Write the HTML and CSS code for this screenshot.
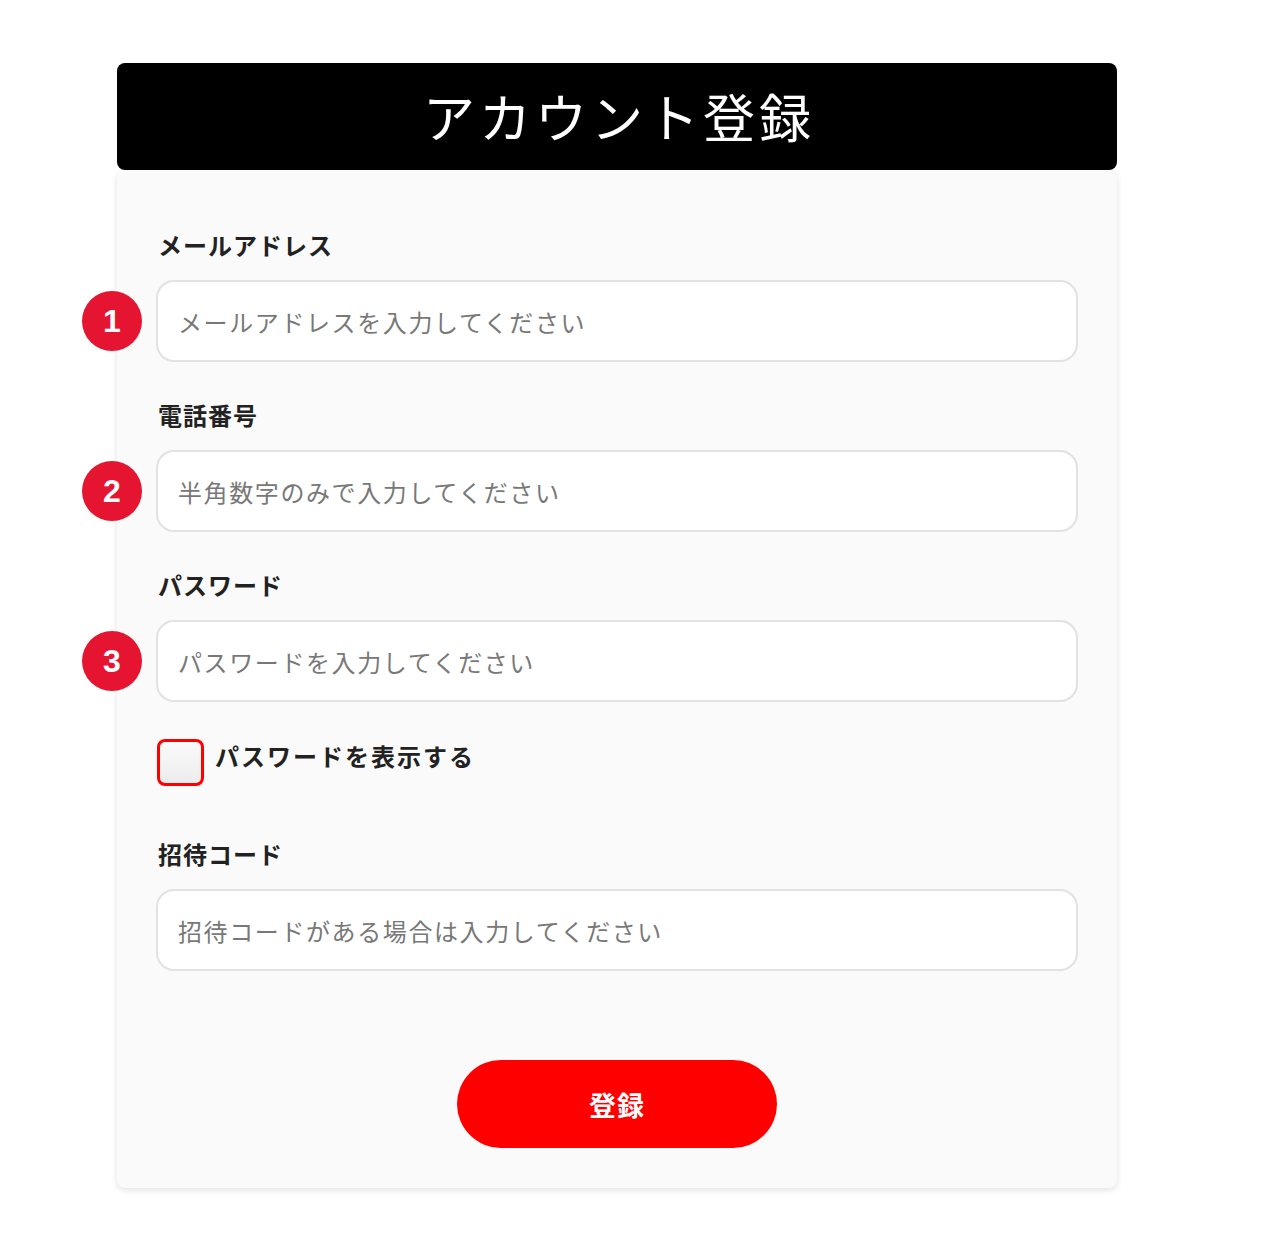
FILE: index.html
```html
<!DOCTYPE html>
<html lang="ja">
<head>
<meta charset="utf-8">
<title>アカウント登録</title>
<link rel="stylesheet" href="styles.css">
</head>
<body>
<div class="page">
  <h1 class="title">アカウント登録</h1>
  <form class="card">
    <div class="field">
      <label class="label">メールアドレス</label>
      <div class="input-wrap">
        <span class="badge">1</span>
        <input class="input" type="text" placeholder="メールアドレスを入力してください">
      </div>
    </div>
    <div class="field">
      <label class="label">電話番号</label>
      <div class="input-wrap">
        <span class="badge">2</span>
        <input class="input" type="text" placeholder="半角数字のみで入力してください">
      </div>
    </div>
    <div class="field">
      <label class="label">パスワード</label>
      <div class="input-wrap">
        <span class="badge">3</span>
        <input class="input" type="password" placeholder="パスワードを入力してください">
      </div>
    </div>
    <label class="check-row">
      <span class="checkbox"></span>
      <span class="check-text">パスワードを表示する</span>
    </label>
    <div class="field field-last">
      <label class="label">招待コード</label>
      <div class="input-wrap">
        <input class="input" type="text" placeholder="招待コードがある場合は入力してください">
      </div>
    </div>
    <div class="actions">
      <button class="submit" type="button">登録</button>
    </div>
  </form>
</div>
</body>
</html>
```
FILE: styles.css
```css
* { box-sizing: border-box; }
html, body { margin: 0; padding: 0; background: #fff; }
body {
  font-family: "Noto Sans CJK JP", "Noto Sans", sans-serif;
  color: #222;
}
.page {
  width: 1000px;
  margin: 63px 0 40px 117px;
}
.title {
  margin: 0;
  height: 107px;
  background: #000;
  color: #fff;
  border-radius: 8px;
  text-align: center;
  font-size: 52px;
  font-weight: 400;
  line-height: 105px;
  letter-spacing: 4px;
  padding-left: 4px;
}
.card {
  background: #fafafa;
  border-radius: 8px;
  box-shadow: 0 2px 6px rgba(0,0,0,0.12);
  padding: 59px 39px 40px 39px;
}
.field { margin-bottom: 37px; }
.field-last { margin-bottom: 0; }
.label {
  display: block;
  padding-left: 2px;
  font-size: 24px;
  font-weight: 700;
  line-height: 32px;
  margin-bottom: 19px;
  color: #222;
  letter-spacing: 1px;
}
.input-wrap { position: relative; }
.badge {
  position: absolute;
  left: -74px;
  top: 50%;
  width: 60px;
  height: 60px;
  margin-top: -30px;
  border-radius: 50%;
  background: #e51431;
  color: #fff;
  font-family: "Liberation Sans", Arial, sans-serif;
  font-weight: 700;
  font-size: 32px;
  line-height: 60px;
  text-align: center;
}
.input {
  display: block;
  width: 100%;
  height: 82px;
  border: 2px solid #e2e2e2;
  border-radius: 18px;
  background: #fff;
  padding: 0 20px;
  font-family: "Noto Sans CJK JP", "Noto Sans", sans-serif;
  font-size: 24px;
  color: #222;
  outline: none;
  letter-spacing: 1.6px;
}
.input::placeholder { color: #787878; }
.check-row {
  display: flex;
  align-items: flex-start;
  gap: 11px;
  margin: 29px 0 52px 1px;
}
.checkbox {
  width: 47px;
  height: 47px;
  border: 3px solid #ff0000;
  border-radius: 8px;
  background: linear-gradient(#fafafa, #ececec);
  flex: none;
}
.check-text {
  font-size: 24px;
  font-weight: 700;
  line-height: 32px;
  margin-top: 1px;
  letter-spacing: 2px;
}
.actions {
  display: flex;
  justify-content: center;
  margin-top: 89px;
}
.submit {
  width: 320px;
  height: 88px;
  border: none;
  border-radius: 44px;
  background: #ff0000;
  color: #fff;
  font-family: "Noto Sans CJK JP", "Noto Sans", sans-serif;
  font-size: 27px;
  font-weight: 700;
  letter-spacing: 1px;
}
```
